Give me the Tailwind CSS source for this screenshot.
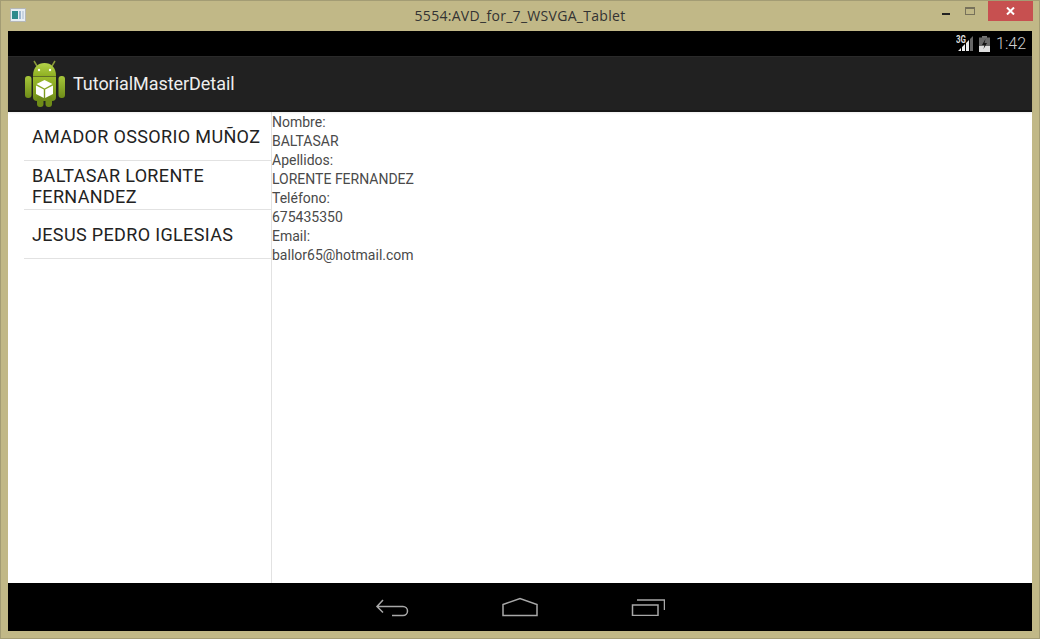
<!DOCTYPE html>
<html>
<head>
<meta charset="utf-8">
<script src="https://cdn.jsdelivr.net/npm/@tailwindcss/browser@4"></script>
</head>
<body class="m-0">
<div class="w-[1040px] h-[639px] bg-[#c1b887] flex flex-col overflow-hidden border border-[#a39c74] font-['Roboto',sans-serif]">
  <!-- title bar -->
  <div class="h-[30px] shrink-0 flex items-center relative pl-[9px]">
    <svg width="16" height="14" viewBox="0 0 16 14" class="mb-[2px]">
      <rect x="0.5" y="0.5" width="15" height="13" fill="#e8eef4" stroke="#b5b8b8"/>
      <rect x="2" y="3" width="6" height="8" fill="#2f8a8c"/>
      <rect x="9" y="3" width="2" height="8" fill="#9fb7d0"/>
      <rect x="12" y="3" width="2" height="8" fill="#c8d4e0"/>
    </svg>
    <div class="absolute left-0 right-0 top-[6px] text-center text-[14px] leading-[18px] tracking-[0.3px] text-[#333] font-['Open_Sans',sans-serif]">5554:AVD_for_7_WSVGA_Tablet</div>
    <div class="absolute right-[6px] top-0 flex items-start">
      <div class="w-[8px] h-[2px] bg-[#222] mt-[12px] mr-[15px]"></div>
      <div class="w-[10px] h-[8px] border border-[#77715a] border-t-2 mt-[6px] mr-[13px]"></div>
      <div class="w-[45px] h-[20px] bg-[#c75050] flex items-center justify-center">
        <svg width="9" height="8" viewBox="0 0 9 8"><path d="M1 0.5 L8 7.500 M8 0.5 L1 7.500" stroke="#fff" stroke-width="2"/></svg>
      </div>
    </div>
  </div>
  <!-- device -->
  <div class="mx-[7px] w-[1024px] h-[600px] flex flex-col bg-white">
    <div class="h-[25px] bg-black shrink-0 flex items-center justify-end pr-[6px]">
      <svg width="18" height="17" viewBox="0 0 18 17" class="mr-[5px]">
        <text x="0" y="8" font-size="10" font-weight="700" font-family="Roboto" fill="#ddd" textLength="10" lengthAdjust="spacingAndGlyphs">3G</text>
        <path d="M2 16h3v-3l-3 3zM6 16h3V9l-3 3zM10 16h3V5l-3 3z" fill="#eee"/>
        <path d="M14 16h3V1l-3 3z" fill="#666"/>
      </svg>
      <svg width="11" height="16" viewBox="0 0 11 16" class="mr-[6px]">
        <rect x="3" y="0" width="5" height="2" fill="#777"/>
        <rect x="0" y="1.500" width="11" height="14.500" fill="#666"/>
        <rect x="0" y="10" width="11" height="6" fill="#ddd"/>
        <path d="M6.500 3 L3 9 H5.500 L4.500 13 L8 7 H5.500z" fill="#111"/>
      </svg>
      <span class="text-[16px] leading-[20px] text-[#cfcfcf] font-light">1:42</span>
    </div>
    <div class="relative z-10 h-[56px] bg-[#212121] shrink-0 flex items-center pl-[16px] border-t border-[#2a2a2a] border-b-2 border-b-[#161616] shadow-[0_1px_2px_rgba(0,0,0,0.08)]">
      <svg width="42" height="48" viewBox="0 0 42 48" class="mt-[1px]">
        <defs>
          <linearGradient id="head" x1="0" y1="0" x2="0" y2="1"><stop offset="0" stop-color="#b4d24a"/><stop offset="1" stop-color="#8fb022"/></linearGradient>
          <linearGradient id="body" x1="0" y1="0" x2="0" y2="1"><stop offset="0" stop-color="#9cbc2c"/><stop offset="1" stop-color="#6f8c18"/></linearGradient>
          <linearGradient id="arm" x1="0" y1="0" x2="0" y2="1"><stop offset="0" stop-color="#a6c63a"/><stop offset="1" stop-color="#6f8c18"/></linearGradient>
        </defs>
        <path d="M13 6 L10 1 M28 6 L31 1" stroke="#8a9a3a" stroke-width="1.500"/>
        <rect x="1" y="16" width="6.500" height="22" rx="3" fill="url(#arm)"/>
        <rect x="34.500" y="16" width="6.500" height="22" rx="3" fill="url(#arm)"/>
        <path d="M9 16 C9 7 14 3 20.500 3 C27 3 32 7 32 16z" fill="url(#head)"/>
        <path d="M9 16.500 H32 V37 a4 4 0 0 1 -4 4 H13 a4 4 0 0 1 -4 -4z" fill="url(#body)"/>
        <rect x="13" y="36" width="6.500" height="11" rx="3" fill="#6f8c18"/>
        <rect x="21.500" y="36" width="6.500" height="11" rx="3" fill="#6f8c18"/>
        <circle cx="15" cy="10" r="1.200" fill="#fff"/>
        <circle cx="26" cy="10" r="1.200" fill="#fff"/>
        <path d="M20.500 20 L28.500 24 L20.500 28.500 L12.500 24z" fill="#fff"/>
        <path d="M12 25.500 L19.800 29.500 V38 L12 34z" fill="#fff"/>
        <path d="M29 25.500 L21.200 29.500 V38 L29 34z" fill="#fff"/>
      </svg>
      <span class="ml-[7px] text-[18px] leading-[24px] tracking-[-0.05px] text-[#eeeeee] mt-[1px]">TutorialMasterDetail</span>
    </div>
    <div class="flex-1 flex min-h-0">
      <div class="w-[264px] shrink-0 border-r border-[#e2e2e2] pl-[16px] text-[18px] leading-[21px] tracking-[0.35px] text-[#222]">
        <div class="h-[49px] flex items-center pl-[8px] border-b border-[#e2e2e2] whitespace-nowrap">AMADOR OSSORIO MUÑOZ</div>
        <div class="h-[49px] flex items-center pl-[8px] pt-[1px] border-b border-[#e2e2e2]">BALTASAR LORENTE<br>FERNANDEZ</div>
        <div class="h-[49px] flex items-center pl-[8px] border-b border-[#e2e2e2]">JESUS PEDRO IGLESIAS</div>
      </div>
      <div class="flex-1 text-[14px] leading-[19px] text-[#4a4a4a] pt-[1px]">
        <div>Nombre:</div>
        <div>BALTASAR</div>
        <div>Apellidos:</div>
        <div>LORENTE FERNANDEZ</div>
        <div>Teléfono:</div>
        <div>675435350</div>
        <div>Email:</div>
        <div>ballor65@hotmail.com</div>
      </div>
    </div>
    <div class="h-[48px] bg-black shrink-0 flex items-center justify-center">
      <div class="w-[290px] flex items-center justify-between h-full">
        <svg width="34" height="20" viewBox="0 0 34 20"><path d="M8 3 L2 9.500 L8 15.500 M2 9.500 H28 a4.500 4.500 0 0 1 0 9 H17" fill="none" stroke="#a8a8a8" stroke-width="1.500"/></svg>
        <svg width="36" height="20" viewBox="0 0 36 20"><path d="M1 7.500 L18 1.500 L35 7.500 V18.500 H1z" fill="none" stroke="#a8a8a8" stroke-width="1.500"/></svg>
        <svg width="34" height="18" viewBox="0 0 34 18"><path d="M1.500 7 H27 V17.500 H1.500z" fill="none" stroke="#a8a8a8" stroke-width="1.500"/><path d="M6 2 H33.500 V12" fill="none" stroke="#a8a8a8" stroke-width="1.500"/></svg>
      </div>
    </div>
  </div>
</div>
</body>
</html>
